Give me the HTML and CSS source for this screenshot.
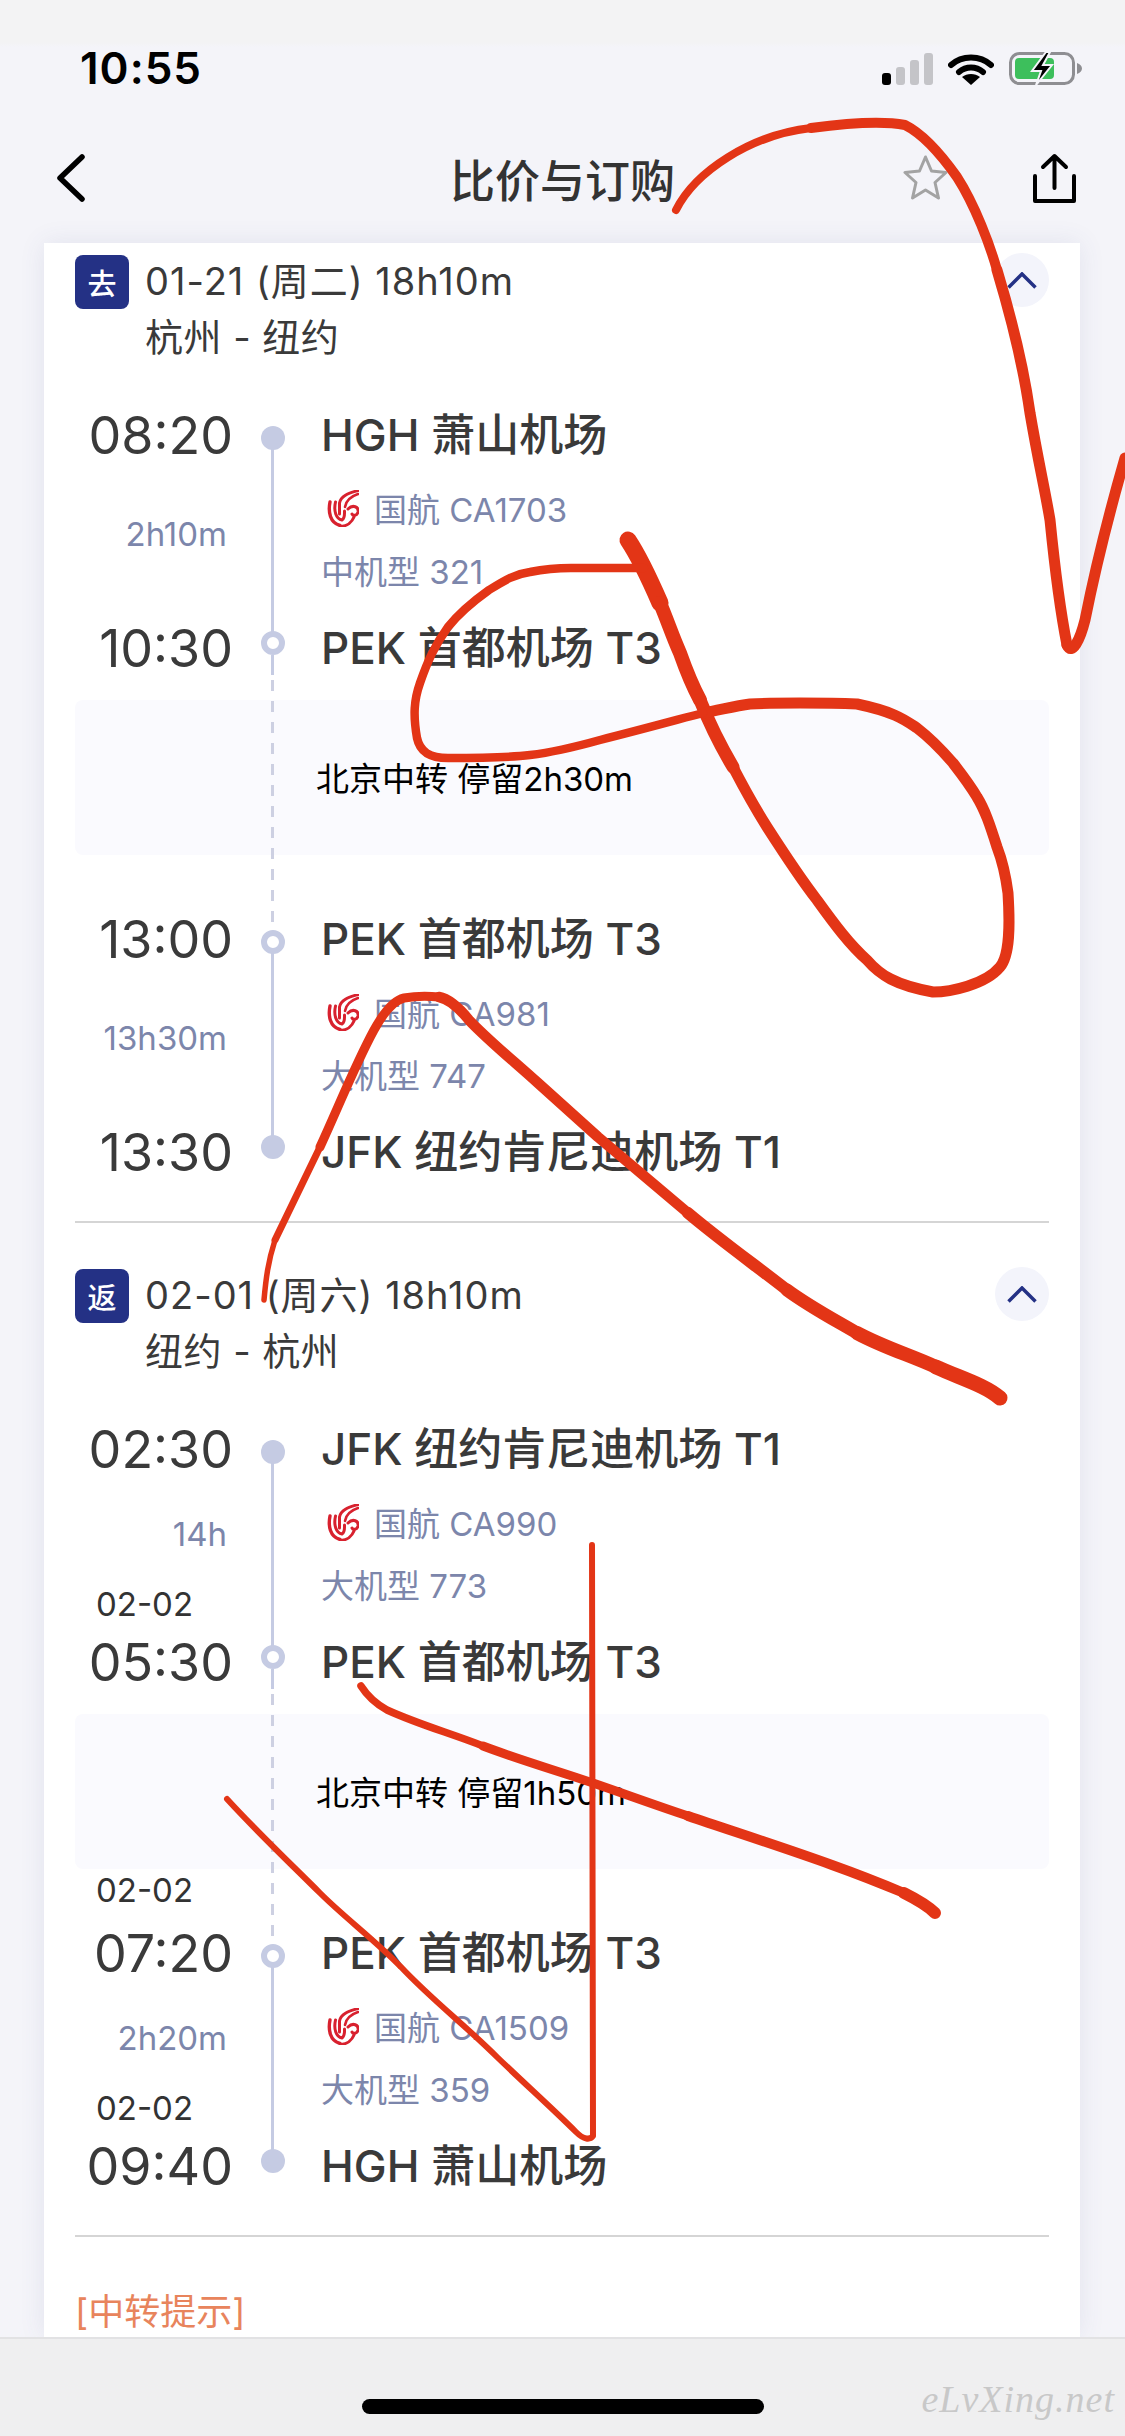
FILE: index.html
```html
<!DOCTYPE html>
<html lang="zh-CN">
<head>
    <meta charset="UTF-8">
    <meta name="viewport" content="width=device-width, initial-scale=1.0">
    <title>比价与订购</title>
    <link rel="stylesheet" href="styles.css">
</head>
<body>
    <svg class="defs" width="0" height="0">
        <symbol id="airchina" viewBox="0 0 32 37">
            <g fill="none" stroke="#d8212e" stroke-linecap="round">
                <path stroke-width="3.4" d="M3 12C1 22 3 33 13 35.500"/>
                <path stroke-width="3" d="M8.500 12C6.500 21 9 29 15 30C18 28 17.500 24 17.500 21"/>
                <path stroke-width="3" d="M31 .5C23 3 14 5 12.500 13V24"/>
                <path stroke-width="2.600" d="M31 4C25 6 19 10 18 17"/>
                <path stroke-width="3" d="M21 19C26 14 32 17 31 22C30 26 26 26 25 24"/>
                <path stroke-width="3" d="M27 27C25 32 20 36 14 36.500"/>
            </g>
        </symbol>
        <symbol id="chevron" viewBox="0 0 30 17">
            <path d="M1.5 15.5L15 2L28.5 15.5" fill="none" stroke="#243185" stroke-width="3.5"/>
        </symbol>
    </svg>

    <div class="top-strip"></div>
    <div class="status-bar">
        <span class="clock">10:55</span>
        <div class="status-icons">
            <svg width="51" height="32" viewBox="0 0 51 32">
                <rect x="0" y="20" width="9" height="12" rx="3" fill="#000"/>
                <rect x="14" y="14" width="9" height="18" rx="3" fill="#c4c4c8"/>
                <rect x="28" y="7" width="9" height="25" rx="3" fill="#c4c4c8"/>
                <rect x="42" y="0" width="9" height="32" rx="3" fill="#c4c4c8"/>
            </svg>
            <svg width="46" height="33" viewBox="0 0 46 33">
                <path d="M3 13C14 3 32 3 43 13" fill="none" stroke="#000" stroke-width="6" stroke-linecap="round"/>
                <path d="M11 20C18 14 28 14 35 20" fill="none" stroke="#000" stroke-width="6" stroke-linecap="round"/>
                <path d="M23 33L14 25C19 21 27 21 32 25Z" fill="#000"/>
            </svg>
            <svg width="73" height="33" viewBox="0 0 73 33">
                <rect x="1.5" y="1.5" width="63" height="30" rx="9" fill="none" stroke="#8e8e92" stroke-width="3"/>
                <path d="M68 11C71 12 73 14 73 16.5C73 19 71 21 68 22Z" fill="#8e8e92"/>
                <rect x="6" y="6" width="39" height="21" rx="4" fill="#3dbf5c"/>
                <path d="M37 0L23 19H32L27 33L43 13H34L41 0Z" fill="#000" stroke="#f4f4f9" stroke-width="2"/>
            </svg>
        </div>
    </div>

    <header class="nav">
        <svg class="back" width="29" height="48" viewBox="0 0 29 48">
            <path d="M26 3L4 24L26 45" fill="none" stroke="#000" stroke-width="5.5" stroke-linecap="round" stroke-linejoin="round"/>
        </svg>
        <h1 class="nav-title">比价与订购</h1>
        <div class="nav-actions">
            <svg width="45" height="48" viewBox="0 0 45 48">
                <path d="M22.5 3L28.5 17L43 18.500L32 28.500L35.500 44L22.5 36L9.500 44L13 28.500L2 18.500L16.500 17Z" fill="none" stroke="#a3a3a3" stroke-width="3" stroke-linejoin="round"/>
            </svg>
            <svg width="43" height="50" viewBox="0 0 43 50">
                <path d="M21.500 35V3M10 14L21.500 3L33 14M2 23V48H41V23" fill="none" stroke="#000" stroke-width="4" stroke-linecap="round" stroke-linejoin="round"/>
            </svg>
        </div>
    </header>

    <main class="card">
        <section class="trip">
            <div class="trip-head">
                <span class="badge">去</span>
                <div class="trip-info">
                    <div class="trip-date">01-21 (周二) 18h10m</div>
                    <div class="trip-route">杭州 - 纽约</div>
                </div>
                <span class="toggle"><svg width="30" height="17"><use href="#chevron"/></svg></span>
            </div>

            <div class="leg">
                <div class="stop stop-first">
                    <span class="time">08:20</span>
                    <span class="node"></span>
                    <span class="airport">HGH 萧山机场</span>
                </div>
                <div class="mid">
                    <div class="mid-time"><span class="duration">2h10m</span></div>
                    <div class="mid-info">
                        <div class="flight"><svg class="logo" width="32" height="37"><use href="#airchina"/></svg>国航 CA1703</div>
                        <div class="plane">中机型 321</div>
                    </div>
                </div>
                <div class="stop stop-last">
                    <span class="time">10:30</span>
                    <span class="node node-open"></span>
                    <span class="airport">PEK 首都机场 T3</span>
                </div>
            </div>

            <div class="transfer">
                <div class="transfer-box">北京中转 停留2h30m</div>
                <div class="after-transfer"></div>
            </div>

            <div class="leg">
                <div class="stop stop-first">
                    <span class="time">13:00</span>
                    <span class="node node-open"></span>
                    <span class="airport">PEK 首都机场 T3</span>
                </div>
                <div class="mid">
                    <div class="mid-time"><span class="duration">13h30m</span></div>
                    <div class="mid-info">
                        <div class="flight"><svg class="logo" width="32" height="37"><use href="#airchina"/></svg>国航 CA981</div>
                        <div class="plane">大机型 747</div>
                    </div>
                </div>
                <div class="stop stop-last">
                    <span class="time">13:30</span>
                    <span class="node"></span>
                    <span class="airport">JFK 纽约肯尼迪机场 T1</span>
                </div>
            </div>
        </section>

        <hr class="rule">

        <section class="trip">
            <div class="trip-head">
                <span class="badge">返</span>
                <div class="trip-info">
                    <div class="trip-date">02-01 (周六) 18h10m</div>
                    <div class="trip-route">纽约 - 杭州</div>
                </div>
                <span class="toggle"><svg width="30" height="17"><use href="#chevron"/></svg></span>
            </div>

            <div class="leg">
                <div class="stop stop-first">
                    <span class="time">02:30</span>
                    <span class="node"></span>
                    <span class="airport">JFK 纽约肯尼迪机场 T1</span>
                </div>
                <div class="mid">
                    <div class="mid-time has-date"><span class="duration">14h</span><span class="next-day">02-02</span></div>
                    <div class="mid-info">
                        <div class="flight"><svg class="logo" width="32" height="37"><use href="#airchina"/></svg>国航 CA990</div>
                        <div class="plane">大机型 773</div>
                    </div>
                </div>
                <div class="stop stop-last">
                    <span class="time">05:30</span>
                    <span class="node node-open"></span>
                    <span class="airport">PEK 首都机场 T3</span>
                </div>
            </div>

            <div class="transfer">
                <div class="transfer-box">北京中转 停留1h50m</div>
                <div class="after-transfer"><span class="next-day">02-02</span></div>
            </div>

            <div class="leg">
                <div class="stop stop-first">
                    <span class="time">07:20</span>
                    <span class="node node-open"></span>
                    <span class="airport">PEK 首都机场 T3</span>
                </div>
                <div class="mid">
                    <div class="mid-time has-date"><span class="duration">2h20m</span><span class="next-day">02-02</span></div>
                    <div class="mid-info">
                        <div class="flight"><svg class="logo" width="32" height="37"><use href="#airchina"/></svg>国航 CA1509</div>
                        <div class="plane">大机型 359</div>
                    </div>
                </div>
                <div class="stop stop-last">
                    <span class="time">09:40</span>
                    <span class="node"></span>
                    <span class="airport">HGH 萧山机场</span>
                </div>
            </div>
        </section>

        <hr class="rule">

        <div class="tips-title">[中转提示]</div>
    </main>

    <footer class="home-bar">
        <span class="home-indicator"></span>
        <span class="watermark">eLvXing.net</span>
    </footer>

    <!-- hand drawn red marks over the screenshot, split up so the pen can get thicker -->
    <svg class="scribble" viewBox="0 0 1125 2436">
        <g fill="none" stroke="#e33516" stroke-linecap="round" stroke-linejoin="round">
            <!-- top right tick -->
            <path stroke-width="8" d="M676 210C695 172 750 135 811 128"/>
            <path stroke-width="10" d="M811 128C855 122 885 121 905 125C925 135 945 160 957 177C975 205 990 245 997 270"/>
            <path stroke-width="11" d="M997 270C1012 320 1024 370 1030 413C1038 460 1045 490 1050 520C1055 570 1060 610 1067 645"/>
            <path stroke-width="11" d="M1067 645C1072 656 1080 640 1085 620C1095 570 1110 510 1125 458"/>
            <!-- figure of eight -->
            <path stroke-width="17" d="M628 540C640 558 650 580 660 603"/>
            <path stroke-width="14" d="M660 603C668 622 672 635 680 653C686 670 692 685 700 700"/>
            <path stroke-width="13" d="M700 700C710 725 720 745 733 767"/>
            <path stroke-width="11" d="M733 767C745 790 755 808 767 827C785 855 800 878 817 900C835 925 850 945 867 960C880 975 895 985 933 992C950 992 985 985 1000 967C1010 955 1010 925 1008 893C1005 870 1002 860 997 847C990 825 985 810 977 797C970 785 960 772 953 763C940 748 930 738 917 728C905 720 895 712 857 704C835 703 820 703 800 703C780 703 765 703 750 704C735 706 720 710 703 713"/>
            <path stroke-width="8.500" d="M703 713C680 719 640 730 600 740C575 747 555 752 530 755C505 758 470 758 448 758C430 758 420 752 417 738C413 715 414 700 420 683C428 660 435 645 448 627C460 612 475 600 489 590C505 580 515 574 530 572C545 569 555 568 571 568L644 568"/>
            <!-- long sweep -->
            <path stroke-width="5.500" d="M264 1300C266 1278 268 1262 275 1240"/>
            <path stroke-width="7" d="M275 1240C290 1209 305 1178 320 1147"/>
            <path stroke-width="9" d="M320 1147C338 1108 355 1065 374 1030C385 1010 395 1000 404 998C415 996 430 996 439 997"/>
            <path stroke-width="10.500" d="M439 997C450 999 460 1009 469 1020C490 1042 515 1062 538 1083C558 1101 578 1119 598 1137C628 1162 658 1188 688 1213"/>
            <path stroke-width="12" d="M688 1213C720 1240 755 1265 787 1290"/>
            <path stroke-width="13" d="M787 1290C810 1307 835 1320 857 1333"/>
            <path stroke-width="14" d="M857 1333C885 1348 910 1355 936 1367"/>
            <path stroke-width="15" d="M936 1367C960 1378 985 1385 1000 1398"/>
            <!-- cross at the bottom -->
            <path stroke-width="6" d="M227 1799C260 1835 290 1863 320 1893C345 1918 375 1940 401 1967C432 2000 465 2025 497 2057C525 2084 552 2108 576 2132C584 2140 590 2140 593 2136L592 1545"/>
            <path stroke-width="7.500" d="M361 1686C368 1697 378 1705 387 1710C420 1725 450 1733 483 1746"/>
            <path stroke-width="9" d="M483 1746C520 1760 555 1770 593 1783C625 1794 655 1805 688 1816"/>
            <path stroke-width="10" d="M688 1816C735 1832 785 1848 832 1865C860 1875 880 1883 904 1893"/>
            <path stroke-width="12" d="M904 1893C918 1900 928 1906 935 1913"/>
        </g>
    </svg>
</body>
</html>
```

FILE: styles.css
```css
* {
    box-sizing: border-box;
}
body {
    position: relative;
    display: flex;
    flex-direction: column;
    width: 1125px;
    height: 2436px;
    margin: 0;
    overflow: hidden;
    background-color: #f4f4f9;
    color: #3a3a3a;
    font-family: Inter, "Noto Sans CJK SC", sans-serif;
}
.defs {
    position: absolute;
}
.top-strip {
    height: 47px;
    flex: none;
    background: linear-gradient(#f3f3f4 90%, #f4f4f9);
}
.status-bar {
    display: flex;
    justify-content: space-between;
    align-items: center;
    height: 42px;
    flex: none;
    padding: 0 43px 0 80px;
}
.clock {
    color: #000;
    font-size: 44px;
    font-weight: 600;
    letter-spacing: 1px;
}
.status-icons {
    display: flex;
    align-items: flex-end;
    gap: 15px;
}
.nav {
    display: grid;
    grid-template-columns: 1fr auto 1fr;
    align-items: center;
    height: 154px;
    flex: none;
    padding: 24px 49px 0;
}
.back {
    margin-left: 7px;
}
.nav-title {
    margin: 0;
    color: #333;
    font-size: 45px;
    font-weight: 500;
}
.nav-actions {
    display: flex;
    justify-content: flex-end;
    align-items: center;
    gap: 85px;
}
.card {
    flex: 1;
    min-height: 0;
    margin: 0 45px 0 44px;
    padding: 10px 31px 0;
    overflow: hidden;
    background-color: #fff;
    box-shadow: 0 0 24px rgba(70, 80, 140, 0.1);
}
.trip-head {
    display: flex;
    align-items: flex-start;
    margin-bottom: 40px;
}
.badge {
    display: flex;
    justify-content: center;
    align-items: center;
    width: 54px;
    height: 54px;
    margin-top: 2px;
    border-radius: 8px;
    background-color: #243185;
    color: #fff;
    font-size: 29px;
    font-weight: 500;
}
.trip-info {
    flex: 1;
    margin-left: 16px;
    font-size: 38px;
    line-height: 56px;
}
.trip-date {
    letter-spacing: 1px;
}
.trip-route {
    letter-spacing: 0.5px;
}
.toggle {
    display: flex;
    justify-content: center;
    align-items: center;
    width: 54px;
    height: 54px;
    border-radius: 50%;
    background-color: #f3f4fb;
}
.leg {
    position: relative;
}
.leg::before {
    content: '';
    position: absolute;
    left: 196px;
    top: 30px;
    bottom: 30px;
    width: 3px;
    background-color: #c5cbe3;
}
.stop {
    display: grid;
    grid-template-columns: 158px 79px 1fr;
    grid-template-rows: 60px;
    align-items: center;
    height: 60px;
}
.time {
    padding-top: 2px;
    font-size: 52px;
    line-height: 58px;
    text-align: right;
}
.node {
    position: relative;
    justify-self: center;
    width: 24px;
    height: 24px;
    border-radius: 50%;
    background-color: #c5cbe3;
}
.node-open {
    border: 6px solid #c5cbe3;
    background-color: #fff;
}
.stop-first .node {
    margin-top: 6px;
}
.stop-last .node {
    margin-top: -10px;
}
.stop-last .node-open::after {
    content: '';
    position: absolute;
    left: calc(50% - 1.5px);
    top: calc(100% + 6px);
    width: 3px;
    height: 20px;
    background-color: #c5cbe3;
}
.airport {
    padding-left: 9px;
    font-size: 44px;
    font-weight: 500;
    line-height: 50px;
    white-space: nowrap;
}
.mid {
    display: grid;
    grid-template-columns: 157px 89px 1fr;
    height: 153px;
    color: #7c86ab;
    font-size: 33px;
}
.mid-time {
    display: flex;
    flex-direction: column;
    align-items: flex-end;
    grid-column: 1;
    padding: 49px 5px 0 0;
    line-height: 40px;
}
.mid-time.has-date {
    padding-top: 35px;
}
.next-day {
    align-self: flex-start;
    margin: 30px 0 0 21px;
    color: #333;
    line-height: 40px;
}
.mid-info {
    grid-column: 3;
    padding-top: 12px;
}
.flight, .plane {
    display: flex;
    align-items: center;
    height: 62px;
}
.logo {
    margin: 0 15px 0 6px;
}
.transfer {
    position: relative;
    padding-top: 22px;
}
.transfer::before {
    content: '';
    position: absolute;
    left: 196px;
    top: 2px;
    bottom: -30px;
    width: 3px;
    background: repeating-linear-gradient(#cdd0e2 0 11px, transparent 11px 21px);
}
.transfer-box {
    display: flex;
    align-items: center;
    height: 155px;
    padding: 0 0 2px 241px;
    border-radius: 8px;
    background-color: #fafafe;
    color: #000;
    font-size: 33px;
}
.after-transfer {
    height: 54px;
}
.after-transfer .next-day {
    display: block;
    margin-top: 0;
    font-size: 33px;
    line-height: 42px;
}
.rule {
    height: 2px;
    margin: 39px 0 44px;
    border: none;
    background-color: #d5d5d5;
}
.tips-title {
    margin-top: 50px;
    color: #e8845c;
    font-size: 36px;
    line-height: 50px;
}
.home-bar {
    position: relative;
    display: flex;
    justify-content: center;
    height: 99px;
    flex: none;
    padding-top: 60px;
    border-top: 2px solid #e2e2e4;
    background-color: #efeff0;
}
.home-indicator {
    width: 402px;
    height: 15px;
    border-radius: 8px;
    background-color: #000;
}
.watermark {
    position: absolute;
    right: 10px;
    top: 38px;
    color: #c8c8c8;
    font-family: "Liberation Serif", serif;
    font-size: 38px;
    font-style: italic;
    letter-spacing: 1px;
}
.scribble {
    position: absolute;
    left: 0;
    top: 0;
    width: 1125px;
    height: 2436px;
    pointer-events: none;
}
```
